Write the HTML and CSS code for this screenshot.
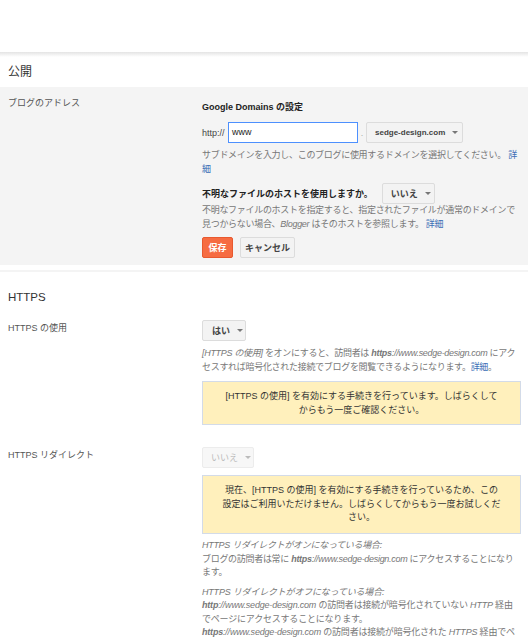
FILE: index.html
```html
<!DOCTYPE html>
<html>
<head>
<meta charset="utf-8">
<link rel="stylesheet" href="styles.css">
</head>
<body>
<div class="topbar"></div>
<div class="shadow"></div>
<h2 class="sec-title first">公開</h2>
<div class="grey">
  <div class="row">
    <div class="label">ブログのアドレス</div>
    <div class="content">
      <div class="strong gd">Google Domains の設定</div>
      <div class="urlrow">
        <span class="http">http://</span>
        <div class="input">www</div>
        <span class="dot">.</span>
        <div class="btn dd domain"><span>sedge-design.com</span><span class="caret"></span></div>
      </div>
      <div class="help h1">サブドメインを入力し、このブログに使用するドメインを選択してください。 <span class="link">詳細</span></div>
      <div class="qrow">
        <span class="strong">不明なファイルのホストを使用しますか。</span>
        <div class="btn dd q">いいえ <span class="caret"></span></div>
      </div>
      <div class="help h2">不明なファイルのホストを指定すると、指定されたファイルが通常のドメインで見つからない場合、<i>Blogger</i> はそのホストを参照します。 <span class="link">詳細</span></div>
      <div class="actions">
        <div class="btn save">保存</div>
        <div class="btn cancel">キャンセル</div>
      </div>
    </div>
  </div>
</div>
<div class="sep"></div>
<h2 class="sec-title https">HTTPS</h2>
<div class="row r1">
  <div class="label">HTTPS の使用</div>
  <div class="content">
    <div class="btn dd yes">はい <span class="caret"></span></div>
    <div class="help h3"><i>[HTTPS の使用]</i> をオンにすると、訪問者は <b><i>https</i></b><i>://www.sedge-design.com</i> にアクセスすれば暗号化された接続でブログを閲覧できるようになります。<span class="link">詳細</span>。</div>
    <div class="notice n1">[HTTPS の使用] を有効にする手続きを行っています。しばらくして<br>からもう一度ご確認ください。</div>
  </div>
</div>
<div class="row r2">
  <div class="label">HTTPS リダイレクト</div>
  <div class="content">
    <div class="btn dd no disabled">いいえ <span class="caret"></span></div>
    <div class="notice n2">現在、[HTTPS の使用] を有効にする手続きを行っているため、この<br>設定はご利用いただけません。しばらくしてからもう一度お試しくだ<br>さい。</div>
    <div class="help para"><i>HTTPS リダイレクトがオンになっている場合:</i><br>ブログの訪問者は常に <b><i>https</i></b><i>://www.sedge-design.com</i> にアクセスすることになります。</div>
    <div class="help para p2"><i>HTTPS リダイレクトがオフになっている場合:</i><br><b><i>http</i></b><i>://www.sedge-design.com</i> の訪問者は接続が暗号化されていない <i>HTTP</i> 経由でページにアクセスすることになります。<br><b><i>https</i></b><i>://www.sedge-design.com</i> の訪問者は接続が暗号化された <i>HTTPS</i> 経由でページにアクセスすることになります。</div>
  </div>
</div>
</body>
</html>
```
FILE: styles.css
```css
html, body {
  margin: 0;
  padding: 0;
  background: #fff;
  font-family: "Liberation Sans", Arial, "Noto Sans CJK JP", sans-serif;
  font-size: 9px;
  color: #333;
  overflow: hidden;
}
.topbar {
  height: 52px;
  background: #fff;
}
.shadow {
  height: 5px;
  background: linear-gradient(#e4e4e4, #fff);
}
.sec-title {
  margin: 0;
  font-weight: normal;
  font-size: 12px;
  color: #333;
  padding-left: 8px;
}
.sec-title.first {
  height: 30px;
  line-height: 30px;
}
.grey {
  background: #f4f4f4;
  padding: 8px 0 7px;
}
.row {
  display: flex;
}
.label {
  width: 194px;
  padding-left: 8px;
  padding-top: 1px;
  color: #555;
  line-height: 14px;
  flex: none;
}
.content {
  width: 319px;
  flex: none;
}
.strong {
  font-weight: bold;
  color: #222;
}
.gd {
  margin-top: 5px;
  line-height: 14px;
}
.urlrow {
  display: flex;
  align-items: center;
  margin-top: 8px;
  height: 21px;
}
.http {
  color: #444;
  width: 26px;
  flex: none;
}
.input {
  width: 125px;
  height: 19px;
  line-height: 19px;
  padding-left: 3px;
  border: 1px solid #4d90fe;
  background: #fff;
  color: #222;
  flex: none;
}
.dot {
  color: #aaa;
  width: 8px;
  text-align: center;
  flex: none;
}
.btn {
  display: inline-flex;
  align-items: center;
  box-sizing: border-box;
  border: 1px solid #dcdcdc;
  background: #f3f3f3;
  border-radius: 2px;
  color: #444;
  font-weight: bold;
  height: 21px;
  padding: 0 8px;
  white-space: nowrap;
  flex: none;
}
.domain {
  width: 97px;
  padding: 0 9px 0 8px;
  justify-content: space-between;
  font-size: 8px;
}
.caret {
  display: inline-block;
  width: 0;
  height: 0;
  border-left: 3px solid transparent;
  border-right: 3px solid transparent;
  border-top: 3px solid #777;
  margin-left: 7px;
}
.help {
  color: #777;
  line-height: 13.5px;
  letter-spacing: -0.3px;
}
.h1 {
  margin-top: 6px;
}
.link {
  color: #3b6fb6;
}
.qrow {
  display: flex;
  align-items: center;
  margin-top: 7px;
}
.q {
  margin-left: 9px;
  width: 53px;
  padding: 0 8px 0 8px;
  justify-content: space-between;
}
.actions {
  display: flex;
  gap: 7px;
  margin-top: 6px;
}
.save {
  background: #f66c42;
  border-color: #e8592f;
  color: #fff;
  width: 31px;
  justify-content: center;
  padding: 0;
}
.cancel {
  width: 55px;
  justify-content: center;
  padding: 0;
}
.sep {
  height: 2px;
  background: #f4f4f4;
  margin-top: 5px;
}
.sec-title.https {
  margin-top: 17px;
  line-height: 16px;
  font-size: 11.5px;
}
.r1 {
  margin-top: 15px;
}
.yes {
  width: 44px;
  justify-content: space-between;
  padding: 0 8px 0 9px;
}
.h3 {
  margin-top: 6px;
}
.notice {
  background: #fff0bc;
  border: 1px solid #d3dbe8;
  text-align: center;
  color: #333;
  line-height: 13.5px;
  margin-top: 7px;
  box-sizing: border-box;
  white-space: nowrap;
}
.n1 {
  height: 44px;
  padding-top: 8px;
}
.r2 {
  margin-top: 22px;
}
.no {
  width: 52px;
  justify-content: space-between;
  padding: 0 8px 0 8px;
}
.disabled {
  background: #f7f7f7;
  border-color: #ececec;
  color: #bbb;
  font-weight: normal;
}
.disabled .caret {
  border-top-color: #bbb;
}
.n2 {
  height: 59px;
  padding-top: 8px;
}
.para {
  margin-top: 5px;
}
.p2 {
  margin-top: 6px;
  letter-spacing: -0.2px;
}
```
